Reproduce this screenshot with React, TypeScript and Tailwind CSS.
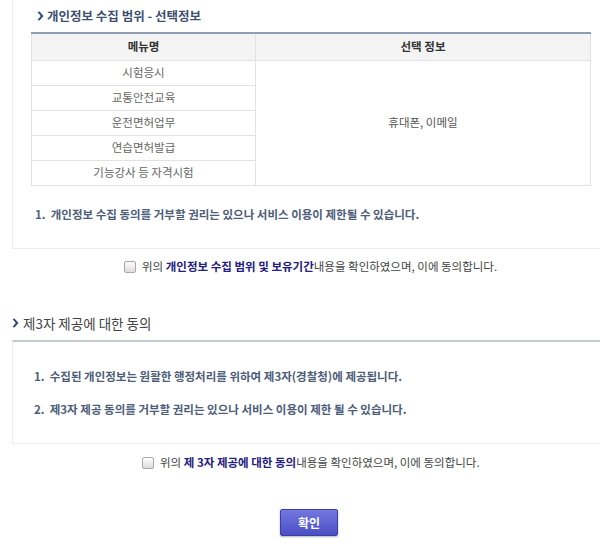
const rows = ['시험응시', '교통안전교육', '운전면허업무', '연습면허발급', '기능강사 등 자격시험'];

function Chevron() {
  return (
    <svg width="7" height="10" viewBox="0 0 7 10" className="shrink-0">
      <path d="M0.5 1 L2.5 0.5 L6.5 5 L2.5 9.5 L0.5 9 L3.8 5 Z" fill="#2c4a7c" />
    </svg>
  );
}

function Check() {
  return (
    <span className="inline-block w-[12px] h-[12px] border border-[#a8a8a8] rounded-[2px] bg-gradient-to-b from-[#fdfdfd] to-[#dcdcdc] mr-[6px] align-[-2px]" />
  );
}

export default function App() {
  return (
    <div
      className="w-[600px] h-[551px] bg-white overflow-hidden text-[11.5px] text-[#555]"
      style={{ fontFamily: '"Noto Sans CJK KR", "Noto Sans", sans-serif' }}
    >
      <div className="ml-[12px] h-[249px] border-l border-b border-[#ececec] pl-[18px] pt-[7px]">
        <div className="flex items-center gap-[3px] h-[18px] pl-[6px] text-[12.5px] font-bold text-[#3d4f70]">
          <Chevron />
          <span>개인정보 수집 범위 - 선택정보</span>
        </div>
        <table className="mt-[7px] w-[560px] border-collapse border-t-2 border-t-[#8e9db5] text-center">
          <thead>
            <tr className="h-[27px] bg-[#f4f4f4] text-[#333] font-bold">
              <th className="w-[224px] border border-[#e2e2e2] border-t-0 font-bold">메뉴명</th>
              <th className="border border-[#e2e2e2] border-t-0 font-bold">선택 정보</th>
            </tr>
          </thead>
          <tbody>
            {rows.map((r, i) => (
              <tr key={r} className="h-[25px]">
                <td className="border border-[#e2e2e2] text-[#666]">{r}</td>
                {i === 0 && (
                  <td rowSpan={5} className="border border-[#e2e2e2] text-[#555]">
                    휴대폰, 이메일
                  </td>
                )}
              </tr>
            ))}
          </tbody>
        </table>
        <p className="mt-[20px] pl-[4px] font-bold text-[#4d5d7a]">
          1.&nbsp; 개인정보 수집 동의를 거부할 권리는 있으나 서비스 이용이 제한될 수 있습니다.
        </p>
      </div>

      <div className="mt-[8px] pl-[124px] h-[18px] leading-[18px] text-[#444]">
        <Check />
        위의 <b className="text-[#25207f]">개인정보 수집 범위 및 보유기간</b>내용을 확인하였으며, 이에 동의합니다.
      </div>

      <div className="mt-[38px] ml-[12px] flex items-center gap-[4px] h-[20px] text-[13.5px] text-[#444]">
        <Chevron />
        <span>제3자 제공에 대한 동의</span>
      </div>

      <div className="mt-[7px] ml-[12px] h-[104px] border-t-2 border-t-[#c3cbd6] border-l border-b border-[#ececec] pl-[21px] pt-[25px] font-bold text-[#4d5d7a]">
        <p className="h-[18px] leading-[18px]">
          1.&nbsp; 수집된 개인정보는 원활한 행정처리를 위하여 제3자(경찰청)에 제공됩니다.
        </p>
        <p className="mt-[15px] h-[18px] leading-[18px]">
          2.&nbsp; 제3자 제공 동의를 거부할 권리는 있으나 서비스 이용이 제한 될 수 있습니다.
        </p>
      </div>

      <div className="mt-[9px] pl-[142px] h-[18px] leading-[18px] text-[#444]">
        <Check />
        위의 <b className="text-[#25207f]">제 3자 제공에 대한 동의</b>내용을 확인하였으며, 이에 동의합니다.
      </div>

      <div className="mt-[38px] flex justify-center pl-[18px]">
        <button className="w-[58px] h-[27px] rounded-[2px] border border-[#3b3fa8] bg-gradient-to-b from-[#7478e0] to-[#4a4ec4] text-white font-bold text-[12px] shadow-[0_1px_2px_rgba(0,0,0,0.3)]">
          확인
        </button>
      </div>
    </div>
  );
}
